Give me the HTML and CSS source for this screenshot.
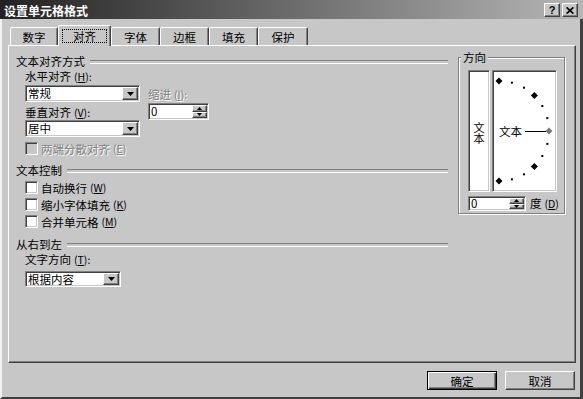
FILE: index.html
```html
<!DOCTYPE html>
<html lang="zh-CN">
<head>
<meta charset="utf-8">
<title>设置单元格格式</title>
<link rel="stylesheet" href="styles.css">
</head>
<body>
<div class="window">
  <div class="titlebar">
    <span class="title">设置单元格格式</span>
    <div class="tbtns">
      <span class="tbtn">?</span>
      <span class="tbtn"><svg width="8" height="7" viewBox="0 0 8 7"><path d="M0.6 0.4L7.4 6.6M7.4 0.4L0.6 6.6" stroke="#000" stroke-width="1.7"/></svg></span>
    </div>
  </div>
  <div class="client">
    <div class="tabs">
      <div class="tab w48">数字</div>
      <div class="tab sel"><span class="focus">对齐</span></div>
      <div class="tab">字体</div>
      <div class="tab">边框</div>
      <div class="tab">填充</div>
      <div class="tab w50">保护</div>
    </div>
    <div class="panel">
      <div class="left">
        <div class="sechead">文本对齐方式</div>
        <div class="label mt1">水平对齐<span class="acc">(<u>H</u>):</span></div>
        <div class="alignrow">
          <div class="acol">
            <div class="combo field"><span class="val">常规</span><span class="dd"><svg width="7" height="4" viewBox="0 0 7 4"><path d="M0 0h7L3.5 4z" fill="#000"/></svg></span></div>
            <div class="label nomargin mt3">垂直对齐<span class="acc">(<u>V</u>):</span></div>
            <div class="combo field mt1"><span class="val">居中</span><span class="dd"><svg width="7" height="4" viewBox="0 0 7 4"><path d="M0 0h7L3.5 4z" fill="#000"/></svg></span></div>
          </div>
          <div class="icol">
            <div class="label nomargin dis">缩进<span class="acc">(<u>I</u>):</span></div>
            <div class="spin field mt2"><span class="val">0</span><span class="spinbtns"><span class="sb"><svg width="5" height="3" viewBox="0 0 5 3"><path d="M2.5 0L5 3H0z" fill="#000"/></svg></span><span class="sb"><svg width="5" height="3" viewBox="0 0 5 3"><path d="M0 0h5L2.5 3z" fill="#000"/></svg></span></span></div>
          </div>
        </div>
        <div class="check dis mt3"><span class="cb field"></span>两端分散对齐<span class="acc">(<u>E</u>)</span></div>
        <div class="sechead mt6">文本控制</div>
        <div class="check mt2"><span class="cb field"></span>自动换行<span class="acc">(<u>W</u>)</span></div>
        <div class="check"><span class="cb field"></span>缩小字体填充<span class="acc">(<u>K</u>)</span></div>
        <div class="check"><span class="cb field"></span>合并单元格<span class="acc">(<u>M</u>)</span></div>
        <div class="sechead mt7">从右到左</div>
        <div class="label mt1">文字方向<span class="acc">(<u>T</u>):</span></div>
        <div class="combo field dir"><span class="val">根据内容</span><span class="dd"><svg width="7" height="4" viewBox="0 0 7 4"><path d="M0 0h7L3.5 4z" fill="#000"/></svg></span></div>
      </div>
      <div class="group">
        <div class="gtitle">方向</div>
        <div class="orient">
          <div class="vbox field"><span class="vtext">文本</span></div>
          <div class="dial field">
            <svg width="63" height="120" viewBox="0 0 63 120">
              <g fill="#000">
                <rect x="17.9" y="10.7" width="2" height="2"/>
                <rect x="30" y="15.7" width="2" height="2"/>
                <rect x="48.3" y="34" width="2" height="2"/>
                <rect x="53.3" y="46.1" width="2" height="2"/>
                <rect x="53.3" y="71.9" width="2" height="2"/>
                <rect x="48.3" y="84" width="2" height="2"/>
                <rect x="30" y="102.3" width="2" height="2"/>
                <rect x="17.9" y="107.3" width="2" height="2"/>
                <path d="M6 6.5L9.5 10L6 13.5L2.5 10z"/>
                <path d="M41.4 21.1L44.9 24.6L41.4 28.1L37.9 24.6z"/>
                <path d="M41.4 91.9L44.9 95.4L41.4 98.9L37.9 95.4z"/>
                <path d="M6 106.5L9.5 110L6 113.5L2.5 110z"/>
              </g>
              <path d="M56 56.5L59.5 60L56 63.5L52.5 60z" fill="#7a7a7a"/>
              <line x1="32" y1="60.5" x2="53" y2="60.5" stroke="#000" stroke-width="1"/>
              <text x="6" y="65" class="dialtext">文本</text>
            </svg>
          </div>
        </div>
        <div class="degrow">
          <div class="spin field small"><span class="val">0</span><span class="spinbtns"><span class="sb"><svg width="5" height="3" viewBox="0 0 5 3"><path d="M2.5 0L5 3H0z" fill="#000"/></svg></span><span class="sb"><svg width="5" height="3" viewBox="0 0 5 3"><path d="M0 0h5L2.5 3z" fill="#000"/></svg></span></span></div>
          <span class="deg">度<span class="acc">(<u>D</u>)</span></span>
        </div>
      </div>
    </div>
    <div class="btnrow">
      <div class="btn def">确定</div>
      <div class="btn">取消</div>
    </div>
  </div>
</div>
</body>
</html>
```
FILE: styles.css
```css
* { box-sizing: border-box; margin: 0; padding: 0; }
html, body { width: 583px; height: 399px; overflow: hidden; }
body {
  background: #c7c7c7;
  font-family: "Noto Sans CJK SC", "Noto Sans", sans-serif;
  font-size: 11.5px;
  line-height: 14px;
  color: #000;
}
.window { width: 583px; height: 399px; display: flex; flex-direction: column; }

.titlebar {
  flex: none; height: 19px;
  display: flex; justify-content: space-between; align-items: flex-start;
  padding: 0 5px 0 4px;
  background: linear-gradient(to right, #222222, #b6b6b6);
}
.title { color: #fff; font-weight: bold; font-size: 12px; line-height: 14px; margin-top: 4px; }
.tbtns { display: flex; gap: 2px; margin-top: 3px; }
.tbtn {
  width: 16px; height: 14px;
  display: flex; align-items: center; justify-content: center;
  background: #c7c7c7;
  border: 1px solid; border-color: #fff #404040 #404040 #fff;
  box-shadow: inset -1px -1px #808080;
  font: bold 11px/1 "Liberation Sans", sans-serif;
}

.client {
  flex: 1; display: flex; flex-direction: column;
  border-left: 2px solid #f2f2f2;
  border-right: 3px solid #404040;
  border-bottom: 2px solid #404040;
  padding: 6px 4px 0 6px;
}

.tabs { display: flex; align-items: flex-end; height: 20px; margin-left: 2px; position: relative; z-index: 1; }
.tab {
  width: 49px; height: 18px;
  border: 1px solid; border-bottom: 0;
  border-color: #fff #404040 transparent #fff;
  border-radius: 2px 2px 0 0;
  box-shadow: inset -1px 0 #808080;
  text-align: center; padding-top: 2px; line-height: 14px;
  background: #c7c7c7;
}
.tab.w48 { width: 48px; }
.tab.w50 { width: 50px; }
.tab.sel { width: 53px; height: 21px; margin-bottom: -1px; padding-top: 3px; }
.focus { display: inline-block; border: 1px dotted #000; padding: 0 10px; line-height: 12px; height: 14px; }

.panel {
  flex: none; height: 318px;
  display: flex; align-items: flex-start;
  border: 1px solid; border-color: #fff #404040 #404040 #fff;
  box-shadow: inset -1px -1px #808080;
  padding: 4px 0 0 7px;
}
.left { width: 432px; flex: none; display: flex; flex-direction: column; padding-top: 4px; }
.sechead { display: flex; align-items: center; height: 14px; }
.sechead::after {
  content: ""; flex: 1; height: 2px;
  border-top: 1px solid #808080; border-bottom: 1px solid #fff;
  margin: 2px 0 0 5px;
}
.label { height: 14px; margin-left: 9px; }
.label.nomargin { margin-left: 0; }
.acc { font-size: 10.5px; margin-left: 3px; }
.mt1 { margin-top: 1px; }
.mt2 { margin-top: 2px; }
.mt3 { margin-top: 3px; }
.mt6 { margin-top: 6px; }
.mt7 { margin-top: 7px; }

.alignrow { display: flex; gap: 8px; margin: 2px 0 0 9px; }
.acol { width: 115px; display: flex; flex-direction: column; }
.icol { display: flex; flex-direction: column; padding-top: 2px; }

.field {
  background: #fff;
  border: 1px solid; border-color: #808080 #fff #fff #808080;
  box-shadow: inset 1px 1px #404040, inset -1px -1px #c7c7c7;
}
.combo { height: 17px; display: flex; padding: 1px; }
.combo.dir { width: 96px; height: 16px; margin: 5px 0 0 9px; }
.combo .val, .spin .val { flex: 1; padding-left: 1px; line-height: 13px; }
.dd {
  width: 16px; flex: none;
  display: flex; align-items: center; justify-content: center;
  background: #c7c7c7;
  border: 1px solid; border-color: #fff #404040 #404040 #fff;
  box-shadow: inset -1px -1px #808080;
}
.spin { width: 61px; height: 17px; display: flex; padding: 1px; }
.spin.small { width: 58px; height: 15px; }
.spin.small .val { line-height: 11px; }
.spinbtns { width: 15px; flex: none; display: flex; flex-direction: column; }
.sb {
  flex: 1; display: flex; align-items: center; justify-content: center;
  background: #c7c7c7;
  border: 1px solid; border-color: #fff #404040 #404040 #fff;
  box-shadow: inset -1px -1px #808080;
}

.check { display: flex; align-items: center; height: 17px; margin-left: 9px; }
.cb { width: 13px; height: 13px; flex: none; margin-right: 3px; }
.dis { color: #808080; text-shadow: 1px 1px 0 #fff; }
.check.dis .cb { background: #c7c7c7; }

.group {
  width: 107px; flex: none;
  margin: 7px 0 0 10px;
  border: 1px solid #808080;
  box-shadow: inset 1px 1px #fff, 1px 1px #fff;
  padding: 0 0 2px 9px;
  display: flex; flex-direction: column;
}
.gtitle { align-self: flex-start; height: 14px; margin: -8px 0 0 -7px; padding: 0 2px; background: #c7c7c7; }
.orient { display: flex; gap: 2px; margin-top: 6px; height: 122px; }
.vbox { width: 22px; display: flex; align-items: center; justify-content: center; padding-top: 3px; }
.vtext { writing-mode: vertical-rl; text-orientation: upright; font-size: 11px; line-height: 14px; }
.dial { width: 65px; }
.dial svg { display: block; }
.dialtext { font-family: "Noto Sans CJK SC", sans-serif; font-size: 11.5px; fill: #000; }
.degrow { display: flex; align-items: center; margin-top: 4px; }
.deg { margin-left: 4px; }

.btnrow { display: flex; justify-content: flex-end; gap: 8px; margin-top: 8px; padding-right: 1px; }
.btn {
  width: 70px; height: 19px;
  display: flex; align-items: center; justify-content: center;
  border: 1px solid; border-color: #fff #404040 #404040 #fff;
  box-shadow: inset -1px -1px #808080;
}
.btn.def { border-color: #000; box-shadow: inset 1px 1px #fff, inset -1px -1px #404040, inset -2px -2px #808080; }
```
